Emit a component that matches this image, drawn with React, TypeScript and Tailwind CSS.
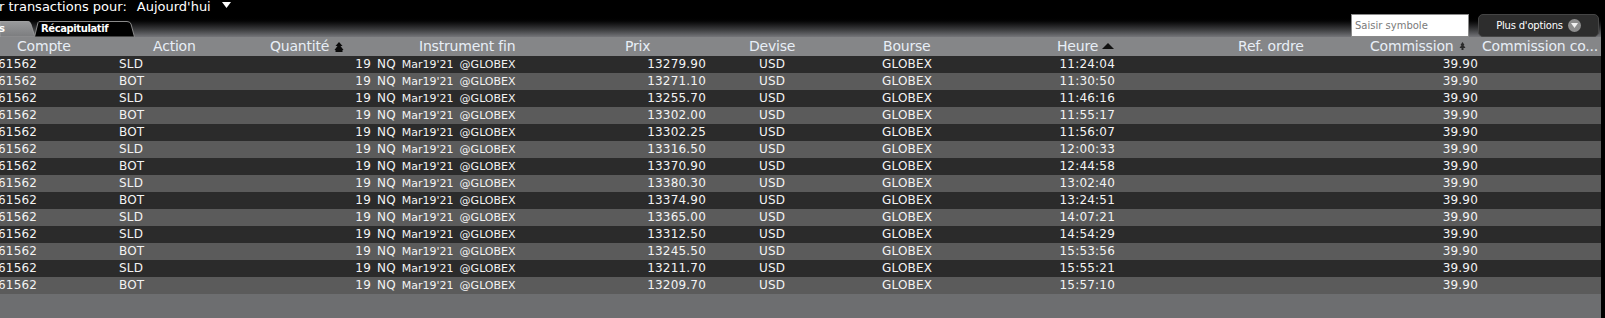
import React from "react";

const rows = [
  ["SLD", "13279.90", "11:24:04"],
  ["BOT", "13271.10", "11:30:50"],
  ["SLD", "13255.70", "11:46:16"],
  ["BOT", "13302.00", "11:55:17"],
  ["BOT", "13302.25", "11:56:07"],
  ["SLD", "13316.50", "12:00:33"],
  ["BOT", "13370.90", "12:44:58"],
  ["SLD", "13380.30", "13:02:40"],
  ["BOT", "13374.90", "13:24:51"],
  ["SLD", "13365.00", "14:07:21"],
  ["SLD", "13312.50", "14:54:29"],
  ["BOT", "13245.50", "15:53:56"],
  ["SLD", "13211.70", "15:55:21"],
  ["BOT", "13209.70", "15:57:10"],
];

function TreeIcon({ small }: { small?: boolean }) {
  if (small) {
    return (
      <svg width="7" height="9" viewBox="0 0 7 9" className="ml-[6px] shrink-0">
        <path d="M3.5 0 L5.5 3 L4.5 3 L6.5 6 L4.5 6 L4.5 8 L2.5 8 L2.5 6 L0.5 6 L2.5 3 L1.5 3 Z" fill="#2a2a2a" />
      </svg>
    );
  }
  return (
    <svg width="10" height="10" viewBox="0 0 10 10" className="ml-[5px] shrink-0">
      <path d="M5 0 L8.5 4 L6.5 4 L9.5 8 L0.5 8 L3.5 4 L1.5 4 Z" fill="#0a0a0a" />
      <rect x="1.5" y="8" width="7" height="2" fill="#0a0a0a" />
    </svg>
  );
}

function TabS() {
  return (
    <div className="relative w-[35px] h-[16px] shrink-0">
      <svg width="35" height="16" viewBox="0 0 35 16" className="absolute inset-0">
        <defs>
          <linearGradient id="tg" x1="0" y1="0" x2="0" y2="1">
            <stop offset="0" stopColor="#9a9b9d" />
            <stop offset="1" stopColor="#7b7c7e" />
          </linearGradient>
        </defs>
        <path d="M0 16 L0 0 L27 0 Q30 0 31 3 L35 16 Z" fill="url(#tg)" stroke="#b0b0b0" strokeWidth="0.6" />
      </svg>
      <span className="relative block ml-[-1px] text-[10px] font-bold leading-[16px] text-white">s</span>
    </div>
  );
}

function TabRecap() {
  return (
    <div className="relative w-[101px] h-[16px] ml-[-1px] shrink-0">
      <svg width="101" height="16" viewBox="0 0 101 16" className="absolute inset-0">
        <path d="M0.5 16 L4 1.5 Q4.5 0.5 6 0.5 L93 0.5 Q96 0.5 97 3 L100.5 16 Z" fill="#000" stroke="#8a8a8a" strokeWidth="1" />
      </svg>
      <span className="relative block pl-[7px] text-[10px] font-bold leading-[16px] tracking-[-0.4px] text-white">
        Récapitulatif
      </span>
    </div>
  );
}

export default function App() {
  return (
    <div className="w-[1605px] h-[318px] flex bg-black overflow-hidden font-['DejaVu_Sans',sans-serif]">
      <div className="w-[1601px] flex flex-col">
        {/* top bar */}
        <div className="h-[14px] flex items-center bg-black text-white text-[13px] leading-[14px] whitespace-nowrap">
          <span className="ml-[-1px]">r transactions pour:</span>
          <span className="ml-[10px]">Aujourd'hui</span>
          <svg width="9" height="6" viewBox="0 0 9 6" className="ml-[11px] mb-[4px] shrink-0">
            <path d="M0 0 L9 0 L4.5 6 Z" fill="#fff" />
          </svg>
        </div>
        {/* tab band */}
        <div className="h-[23px] flex items-end justify-between bg-gradient-to-b from-black from-[12%] to-[#75767a]">
          <div className="flex items-end">
            <TabS />
            <TabRecap />
          </div>
          <div className="flex items-stretch h-[23px] mr-[2px]">
            <div className="w-[118px] bg-white border border-[#8a8a8a] flex items-center pl-[3px] text-[10px] text-[#7a7a7a]">
              Saisir symbole
            </div>
            <div className="ml-[9px] w-[121px] rounded-[5px] bg-[#2d2d2d] border border-[#454545] flex items-center justify-center text-[10px] text-white tracking-[-0.2px]">
              <span>Plus d'options</span>
              <span className="ml-[5px] w-[13px] h-[13px] rounded-full bg-[#8e8e8e] flex items-center justify-center shrink-0">
                <svg width="7" height="5" viewBox="0 0 7 5">
                  <path d="M0 0 L7 0 L3.5 5 Z" fill="#f2f2f2" />
                </svg>
              </span>
            </div>
          </div>
        </div>
        {/* header */}
        <div className="h-[19px] flex bg-[#858688] text-[14px] leading-[19px] text-[#e8eef6] tracking-[-0.2px] whitespace-nowrap">
          <div className="w-[100px] shrink-0 pl-[17px]">Compte</div>
          <div className="w-[150px] shrink-0 pl-[53px]">Action</div>
          <div className="w-[125px] shrink-0 pl-[20px] flex items-center">
            <span>Quantité</span>
            <TreeIcon />
          </div>
          <div className="w-[185px] shrink-0 pl-[44px]">Instrument fin</div>
          <div className="w-[160px] shrink-0 pl-[65px]">Prix</div>
          <div className="w-[110px] shrink-0 pl-[29px]">Devise</div>
          <div className="w-[130px] shrink-0 pl-[53px]">Bourse</div>
          <div className="w-[170px] shrink-0 pl-[97px] flex items-center">
            <span>Heure</span>
            <svg width="12" height="6" viewBox="0 0 12 6" className="ml-[4px] mb-[2px] shrink-0">
              <path d="M0 6 L6 0 L12 6 Z" fill="#111" />
            </svg>
          </div>
          <div className="w-[210px] shrink-0 pl-[108px]">Ref. ordre</div>
          <div className="w-[140px] shrink-0 pl-[30px] flex items-center">
            <span>Commission</span>
            <TreeIcon small />
          </div>
          <div className="w-[121px] shrink-0 pl-[2px] overflow-hidden">Commission co...</div>
        </div>
        {/* rows */}
        {rows.map((r, i) => (
          <div
            key={i}
            className={`h-[17px] flex text-[12px] leading-[17px] text-[#f3f3f3] tracking-[0.2px] whitespace-nowrap ${
              i % 2 === 0 ? "bg-[#2b2b2b]" : "bg-[#5b5b5b]"
            }`}
          >
            <div className="w-[100px] shrink-0 ml-[-2px] mr-[2px]">61562</div>
            <div className="w-[150px] shrink-0 pl-[19px]">{r[0]}</div>
            <div className="w-[125px] shrink-0 pr-[4px] text-right">19</div>
            <div className="w-[185px] shrink-0 pl-[2px] flex items-center">
              <span>NQ</span>
              <span className="ml-[6px] text-[11px] tracking-[0px]">Mar19'21</span>
              <span className="ml-[6px] text-[11px] tracking-[0px]">@GLOBEX</span>
            </div>
            <div className="w-[160px] shrink-0 pr-[14px] text-right">{r[1]}</div>
            <div className="w-[110px] shrink-0 pl-[39px]">USD</div>
            <div className="w-[130px] shrink-0 pl-[52px]">GLOBEX</div>
            <div className="w-[170px] shrink-0 pr-[15px] text-right">{r[2]}</div>
            <div className="w-[210px] shrink-0"></div>
            <div className="w-[140px] shrink-0 pr-[2px] text-right">39.90</div>
            <div className="w-[121px] shrink-0"></div>
          </div>
        ))}
        <div className="flex-1 bg-[#6d6e70]" />
      </div>
      <div className="w-[4px] bg-black" />
    </div>
  );
}
